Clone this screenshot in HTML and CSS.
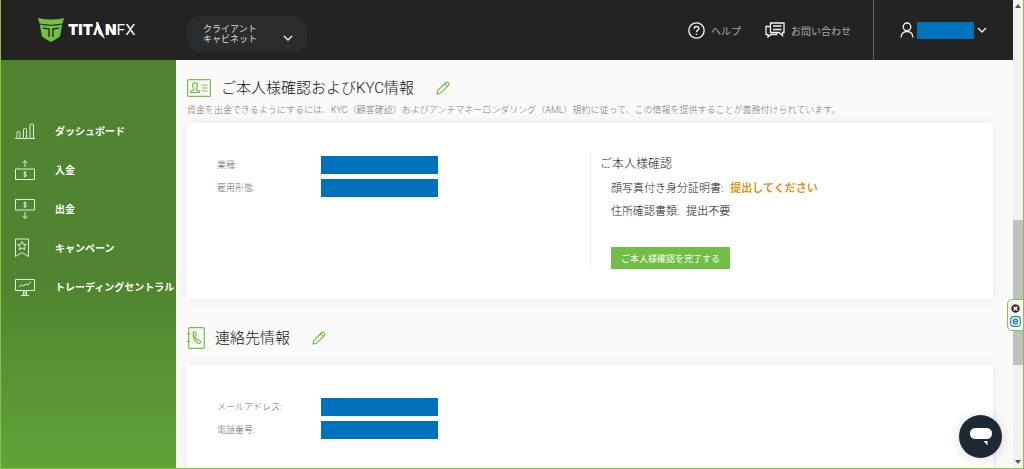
FILE: index.html
```html
<!DOCTYPE html>
<html lang="ja">
<head>
<meta charset="utf-8">
<meta name="viewport" content="width=device-width, initial-scale=1">
<title>クライアントキャビネット | TITANFX</title>
<link rel="stylesheet" href="styles.css">
</head>
<body>
<div class="frame">
  <div class="app">
    <header class="topbar">
      <a class="brand" href="#" aria-label="TITANFX">
        <svg class="brand-mark" viewBox="0 0 26 24" aria-hidden="true">
          <path fill="#74bf44" d="M0 0Q13 3 26 0L24.500 5.500Q13 7.800 1.500 5.500Z"/>
          <path fill="#74bf44" d="M1.800 6.500Q13 9 24.200 6.500L22 18.500Q18 21.500 13 24Q8 21.500 4 18.500Z"/>
          <path fill="none" stroke="#232323" stroke-width="1.300" d="M5 10.200Q9 10.800 11 11V19M21 10.200Q17 10.800 15 11V19"/>
        </svg>
        <span class="brand-text"><b>TIT</b><svg class="brand-a" viewBox="0 0 12 17" aria-hidden="true"><path fill="#fff" d="M3 0H5L12 17L6 12L4.500 7L2.800 13H0L3.500 3Z"/></svg><b>N</b><span class="brand-fx">FX</span></span>
      </a>
      <button class="switcher" type="button">
        <span>クライアント<br>キャビネット</span>
        <svg class="chevron" viewBox="0 0 10 6" aria-hidden="true"><path d="M1 1L5 5L9 1"/></svg>
      </button>
      <nav class="support">
        <a href="#">
          <svg class="icon-help" viewBox="0 0 16 16" aria-hidden="true"><circle cx="8" cy="8" r="7.200"/><path d="M5.800 6.300Q5.800 4.200 8 4.200T10.200 6.200C10.200 7.700 8 7.700 8 9.700M8 11V12.300"/></svg>
          ヘルプ</a>
        <a href="#">
          <svg class="icon-chat" viewBox="0 0 20 16" aria-hidden="true"><path d="M5.500 1H19V10.500H17.500V13.500L14 10.500H5.500ZM8 4H16.500M8 7.500H16.500M5.500 4.500H1V12.500H3V15L6 12.500H11.500V10.500"/></svg>
          お問い合わせ</a>
      </nav>
      <button class="account" type="button" aria-label="アカウント">
        <svg class="icon-user" viewBox="0 0 14 16" aria-hidden="true"><circle cx="7" cy="4.800" r="3.800"/><path d="M1 15.500Q1.500 9.500 7 9.500T13 15.500"/></svg>
        <span class="redacted redacted-name"></span>
        <svg class="chevron" viewBox="0 0 10 6" aria-hidden="true"><path d="M1 1L5 5L9 1"/></svg>
      </button>
    </header>

    <nav class="sidebar">
      <a href="#"><svg viewBox="0 0 20 20" aria-hidden="true"><path d="M0 17.500H20M2 17.500V11.500Q2 10.500 3 10.500H4Q5 10.500 5 11.500V17.500M8.500 17.500V8.500Q8.500 7.500 9.500 7.500H10.500Q11.500 7.500 11.500 8.500V17.500M15 17.500V4Q15 3 16 3H17.500Q18.500 3 18.500 4V17.500"/></svg>ダッシュボード</a>
      <a href="#"><svg viewBox="0 0 20 20" aria-hidden="true"><path d="M.5 9H19.500V19.500H.5ZM10 7V.7M7.500 3L10 .7L12.500 3M11.500 12.500Q10 11.500 9 12.500T10 14.200T11 16T8.500 16M10 11.300V17.300"/></svg>入金</a>
      <a href="#"><svg viewBox="0 0 20 20" aria-hidden="true"><path d="M.5 .5H19.500V11H.5ZM10 13V19.300M7.500 17L10 19.300L12.500 17M11.500 4Q10 3 9 4T10 5.700T11 7.500T8.500 7.500M10 2.800V8.800"/></svg>出金</a>
      <a href="#"><svg viewBox="0 0 20 20" aria-hidden="true"><path d="M.5 1H13.500V18.500L7 14.500L.5 18.500ZM7 3.500L8.300 6.300L11.300 6.600L9 8.600L9.700 11.600L7 10L4.300 11.600L5 8.600L2.700 6.600L5.700 6.300Z"/></svg>キャンペーン</a>
      <a href="#"><svg viewBox="0 0 20 20" aria-hidden="true"><path d="M.5 2.500H19.500V13.500H.5ZM4 10L6.500 8L8.500 9L11 7L13 8L16 4.500M8.500 13.500V18M11.500 13.500V18M10 13.500V18M6 18.500H14"/></svg>トレーディングセントラル</a>
    </nav>

    <main class="content">
      <section class="section">
        <div class="section-head">
          <svg class="icon-id" viewBox="0 0 24 18" aria-hidden="true"><rect x=".6" y=".6" width="22.800" height="16.800" rx="1"/><path d="M3.500 13.500V12L6.500 11V9Q5.500 8 5.500 6Q5.500 3.800 8 3.800T10.500 6Q10.500 8 9.500 9V11L12.500 12V13.500ZM15 6H20.500M15 9H20.500M15 12H20.500"/></svg>
          <h2>ご本人様確認およびKYC情報</h2>
          <button class="edit" type="button" aria-label="編集"><svg viewBox="0 0 14 14" aria-hidden="true"><path d="M1 13L1.700 9.500L9.700 1.500Q10.700 .5 12 1.700T12.500 4.300L4.500 12.300ZM8.500 2.700L11.300 5.500"/></svg></button>
        </div>
        <p class="note">資金を出金できるようにするには、KYC（顧客確認）およびアンチマネーロンダリング（AML）規約に従って、この情報を提供することが義務付けられています。</p>
        <div class="card card-kyc">
          <dl class="facts">
            <div><dt>業種:</dt><dd class="redacted"></dd></div>
            <div><dt>雇用形態:</dt><dd class="redacted"></dd></div>
          </dl>
          <div class="verify">
            <h3>ご本人様確認</h3>
            <p>顔写真付き身分証明書:<strong class="todo">提出してください</strong></p>
            <p>住所確認書類:<strong class="none">提出不要</strong></p>
            <button class="primary" type="button">ご本人様確認を完了する</button>
          </div>
        </div>
      </section>

      <section class="section section-contact">
        <div class="section-head">
          <svg class="icon-book" viewBox="0 0 18 22" aria-hidden="true"><rect x="1.700" y=".7" width="15.600" height="20.600" rx="1"/><path d="M0 7H3.500M0 14.500H3.500M6.500 5.200L8.200 5Q9.500 7 8.800 8.500L7.800 9.200Q8.500 12 10.500 13.300L11.800 12.800Q13.300 13.500 13.700 15L12.500 16.500Q9.500 16.300 7.500 13T6.500 5.200Z"/></svg>
          <h2>連絡先情報</h2>
          <button class="edit" type="button" aria-label="編集"><svg viewBox="0 0 14 14" aria-hidden="true"><path d="M1 13L1.700 9.500L9.700 1.500Q10.700 .5 12 1.700T12.500 4.300L4.500 12.300ZM8.500 2.700L11.300 5.500"/></svg></button>
        </div>
        <div class="card card-contact">
          <dl class="facts">
            <div><dt>メールアドレス:</dt><dd class="redacted"></dd></div>
            <div><dt>電話番号:</dt><dd class="redacted"></dd></div>
          </dl>
        </div>
      </section>
    </main>
  </div>

  <div class="scrollbar" aria-hidden="true">
    <svg viewBox="0 0 6 4"><path d="M0 4L3 0L6 4Z"/></svg>
    <div class="track"><span></span></div>
    <svg viewBox="0 0 6 4"><path d="M0 0L3 4L6 0Z"/></svg>
  </div>

  <div class="dock">
    <button type="button" aria-label="閉じる"><svg viewBox="0 0 10 10" aria-hidden="true"><circle cx="5" cy="5" r="4.700" fill="#333"/><path d="M3 3L7 7M7 3L3 7" stroke="#fff" stroke-width="1.600"/></svg></button>
    <button type="button" aria-label="拡張機能"><svg viewBox="0 0 12 12" aria-hidden="true"><rect x=".7" y=".7" width="10.600" height="10.600" rx="3.500" fill="#fff" stroke="#2389a0" stroke-width="1.200"/><path d="M3.500 6H8.500Q8.500 3.400 6 3.400T3.500 6T6 8.600Q7.500 8.600 8.300 7.600" fill="none" stroke="#2389a0" stroke-width="1.500"/></svg></button>
  </div>
  <button class="chat" type="button" aria-label="チャット"><svg viewBox="0 0 22 18" aria-hidden="true"><path fill="#fff" d="M6 0H16Q22 0 22 5.500T16 11H6Q0 11 0 5.500T6 0ZM13.500 13H17.500V17.500Z"/></svg></button>
</div>
</body>
</html>
```
FILE: styles.css
```css
* { box-sizing: border-box; }

body,
h2,
h3,
p,
dl,
dd { margin: 0; }

body {
  font-family: Roboto, "Noto Sans CJK JP", sans-serif;
  font-size: 9px;
  color: #222;
}

a { color: inherit; text-decoration: none; }

button {
  padding: 0;
  border: 0;
  background: none;
  color: inherit;
  font: inherit;
  cursor: pointer;
}

svg { display: block; flex: none; }

.frame {
  position: relative;
  display: flex;
  height: 100vh;
  overflow: hidden;
  border: 1px solid #86c440;
  border-top: 0;
}

.app {
  flex: 1;
  min-width: 0;
  display: grid;
  grid-template: 60px 1fr / 175px 1fr;
}

/* Top bar */
.topbar {
  grid-column: 1 / -1;
  display: flex;
  align-items: center;
  background: #232323;
  color: #aaa;
}

.brand {
  display: flex;
  align-items: center;
  gap: 4px;
  width: 186px;
  padding-left: 37px;
}

.brand-mark { width: 26px; height: 24px; }

.brand-text {
  display: flex;
  align-items: center;
  color: #fff;
  font: 15px/16px Inter, sans-serif;
}

.brand-text b { font-weight: 900; }
.brand-a { width: 12px; height: 17px; }
.brand-fx { font-weight: 400; }

.switcher {
  display: flex;
  align-items: center;
  justify-content: space-between;
  width: 120px;
  height: 36px;
  margin-top: 8px;
  padding: 0 14px 0 16px;
  border-radius: 14px;
  background: #2c2c2c;
  color: #ddd;
  line-height: 10px;
  text-align: left;
}

.switcher .chevron { margin-top: 8px; }

.chevron { width: 10px; height: 6px; }

.chevron path,
.support path,
.support circle,
.icon-user * {
  fill: none;
  stroke: #f2f2f2;
  stroke-width: 1.3;
}

.support {
  display: flex;
  gap: 24px;
  margin-left: auto;
  padding-right: 22px;
  font-size: 10px;
}

.support a {
  display: flex;
  align-items: center;
  gap: 6px;
}

.icon-help { width: 17px; height: 17px; }
.icon-chat { width: 20px; height: 16px; }

.account {
  display: flex;
  align-items: center;
  align-self: stretch;
  gap: 3px;
  padding: 0 26px;
  border-left: 1px solid #666;
}

.icon-user { width: 14px; height: 16px; }

.redacted { background: #0072bc; }
.redacted-name { width: 57px; height: 17px; }

/* Sidebar */
.sidebar {
  padding-top: 51px;
  background: linear-gradient(#518430, #518430 55%, #60a339);
  color: #fff;
  font-size: 10px;
  font-weight: 700;
}

.sidebar a {
  display: flex;
  align-items: center;
  gap: 20px;
  height: 39px;
  padding-left: 14px;
  white-space: nowrap;
}

.sidebar svg { width: 20px; height: 20px; }

.sidebar path {
  fill: none;
  stroke: #e0eed9;
  stroke-width: 1;
}

/* Content */
.content {
  min-width: 0;
  overflow: hidden;
  padding: 16px 20px 0 11px;
  background: #fafafa;
}

.section-contact { margin-top: 27px; }

.section-head {
  display: flex;
  align-items: center;
  height: 24px;
}

.section-head h2 {
  margin: 0 22px 0 10px;
  color: #111;
  font-size: 15px;
  font-weight: 300;
  line-height: 24px;
}

.section-head svg {
  fill: none;
  stroke: #74bf44;
  stroke-width: 1.2;
}

.icon-id { width: 24px; height: 18px; }
.icon-book { width: 18px; height: 22px; }
.edit svg { width: 14px; height: 14px; }

.note {
  height: 23px;
  color: #777;
  font-weight: 300;
  line-height: 20px;
  white-space: nowrap;
}

.card {
  display: grid;
  grid-template-columns: 1fr 1fr;
  padding: 29px 30px 0;
  background: #fff;
  box-shadow: 0 0 10px #00000014;
}

.card-kyc { padding-bottom: 30px; }
.card-contact { margin-top: 15px; min-height: 176px; }

.facts {
  display: grid;
  align-content: start;
  gap: 5px;
  padding-top: 4px;
  font-weight: 300;
}

.facts div {
  display: grid;
  grid-template-columns: 104px 117px;
}

.facts dt { height: 18px; color: #666; line-height: 18px; }

.verify {
  padding: 3px 0 0 9px;
  border-left: 1px solid #eee;
}

.verify h3 {
  margin-bottom: 4px;
  font-size: 12px;
  font-weight: 300;
  line-height: 18px;
}

.verify p {
  padding-left: 11px;
  font-size: 11px;
  font-weight: 300;
  line-height: 23px;
}

.verify strong { margin-left: 7px; font-weight: 400; }
.verify .todo { color: #dc951b; font-weight: 700; }
.verify .none { color: #555; }

.primary {
  display: block;
  height: 22px;
  margin: 24px 0 0 11px;
  padding: 0 10px;
  background: #70be44;
  color: #fff;
  white-space: nowrap;
}

/* Scrollbar */
.scrollbar {
  display: flex;
  flex-direction: column;
  align-items: center;
  width: 10px;
  padding: 4px 0;
  background: #f1f1f1;
}

.scrollbar svg { width: 6px; height: 4px; fill: #555; }

.track {
  flex: 1;
  display: grid;
  grid-template-rows: 47% 32%;
  align-self: stretch;
}

.track span { grid-row: 2; background: #c1c1c1; }

/* Floating controls */
.dock {
  position: absolute;
  top: 299px;
  right: -4px;
  display: grid;
  justify-items: center;
  gap: 3px;
  width: 20px;
  padding: 4px 4px 3px 0;
  border: 1px solid #86c440;
  border-radius: 5px;
  background: #f8f8f8;
}

.dock button:first-child svg { width: 9px; height: 9px; }
.dock svg { width: 11px; height: 11px; }

.chat {
  position: absolute;
  right: 21px;
  bottom: 10px;
  display: grid;
  place-items: center;
  width: 43px;
  height: 43px;
  border-radius: 50%;
  background: #1d2935;
  box-shadow: 0 1px 12px #00000026;
}

.chat svg { width: 22px; height: 18px; }
```
